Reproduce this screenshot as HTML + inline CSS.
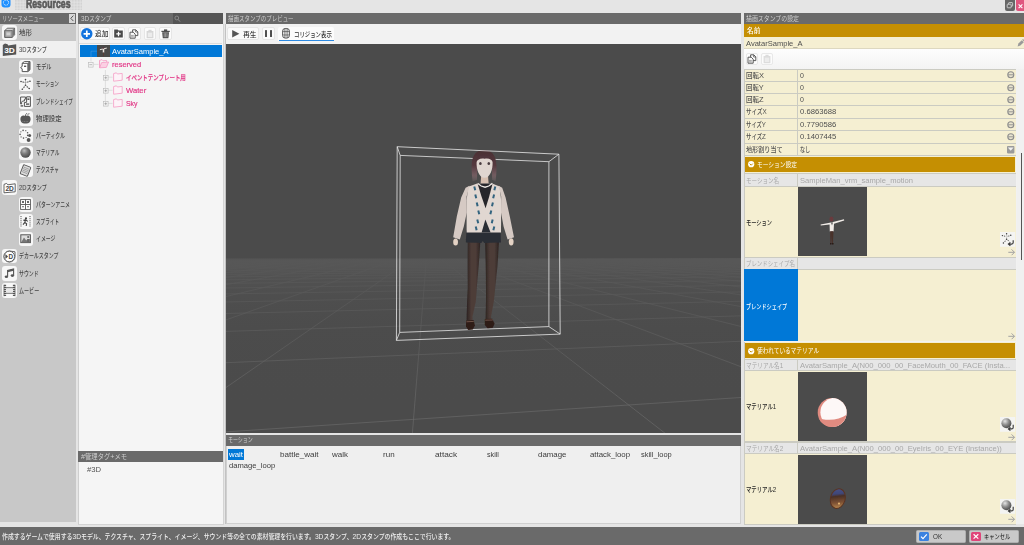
<!DOCTYPE html>
<html lang="ja">
<head>
<meta charset="utf-8">
<title>Resources</title>
<style>
*{box-sizing:border-box;margin:0;padding:0}
html,body{width:1024px;height:545px;overflow:hidden;background:#e5e5e5}
body{position:relative;font-family:"Liberation Sans","Noto Sans CJK JP",sans-serif;font-size:7.5px;color:#444;line-height:1}
.a{position:absolute}
.t{position:absolute;white-space:nowrap;line-height:10px;height:10px;transform-origin:0 50%}
svg{position:absolute;overflow:visible}
.t b{font-weight:400;font-size:7.9px}
</style>
</head>
<body>
<div class="a" style="left:0px;top:0px;width:1024px;height:13px;background:#e5e5e5;"></div>
<svg style="left:15px;top:0" width="67" height="10" viewBox="0 0 67 10"><defs><pattern id="dt" width="1.5" height="1.5" patternUnits="userSpaceOnUse"><rect x="0.2" y="0.2" width="0.75" height="0.75" fill="#bcbcbc"/></pattern></defs><rect width="67" height="10" fill="url(#dt)"/></svg>
<div class="a" style="left:1005px;top:0px;width:10px;height:10.5px;background:#666;border-radius:0 0 2px 2px"></div>
<svg style="left:1005px;top:0" width="10" height="10.5" viewBox="0 0 10 10.5"><rect x="3.6" y="2.6" width="4" height="3.6" fill="none" stroke="#ddd" stroke-width="0.8" rx="0.6"/><rect x="2.2" y="4.2" width="4" height="3.6" fill="#666" stroke="#ddd" stroke-width="0.8" rx="0.6"/></svg>
<div class="a" style="left:1016px;top:0px;width:8px;height:10.5px;background:#e0567f;border-radius:0 0 0 2px"></div>
<svg style="left:1016px;top:0" width="8" height="10.5" viewBox="0 0 8 10.5"><path d="M2.6 4.4L6.4 8.2M6.4 4.4L2.6 8.2" stroke="#fff" stroke-width="1.1"/></svg>
<svg style="left:1px;top:-2px" width="10" height="10" viewBox="0 0 10 10"><rect x="0.5" y="0" width="9" height="9.5" rx="3" fill="#1e90ff"/><circle cx="5" cy="4.6" r="2.6" fill="none" stroke="#fff" stroke-width="1" stroke-dasharray="1 0.8"/></svg>
<div class="a" style="left:0px;top:13.2px;width:76px;height:10.8px;background:#6a6a6a;"></div>
<div class="a" style="left:69px;top:14.3px;width:6.2px;height:8.7px;background:#d8d8d8;"></div>
<svg style="left:69px;top:14.3px" width="6.2" height="8.7" viewBox="0 0 6.2 8.7"><path d="M4.4 1.6L1.8 4.35L4.4 7.1" fill="none" stroke="#555" stroke-width="1"/></svg>
<div class="a" style="left:78.2px;top:13.2px;width:144.8px;height:10.8px;background:#6a6a6a;"></div>
<div class="a" style="left:173px;top:13.2px;width:50px;height:10.8px;background:#555;"></div>
<svg style="left:174px;top:14.5px" width="7" height="8" viewBox="0 0 7 8"><circle cx="2.8" cy="3" r="1.9" fill="none" stroke="#939393" stroke-width="0.8"/><path d="M4.2 4.5L6 6.6" stroke="#939393" stroke-width="1"/></svg>
<div class="a" style="left:225.8px;top:13.2px;width:515.7px;height:10.8px;background:#6a6a6a;"></div>
<div class="a" style="left:744px;top:13.2px;width:280px;height:11.3px;background:#6a6a6a;"></div>
<div class="a" style="left:0px;top:526.6px;width:1024px;height:18.4px;background:#6a6a6a;"></div>
<div class="a" style="left:916.4px;top:530px;width:49.6px;height:13.2px;background:#c9c9c9;border-radius:1.5px;border:0.5px solid #b0b0b0"></div>
<div class="a" style="left:919.2px;top:532.2px;width:9.6px;height:8.8px;background:#3b82e0;border-radius:1.5px"></div>
<svg style="left:919.2px;top:532.2px" width="9.6" height="8.8" viewBox="0 0 9.6 8.8"><path d="M2 4.6L4 6.6L7.8 2.4" fill="none" stroke="#fff" stroke-width="1.2"/></svg>
<div class="a" style="left:968.7px;top:530px;width:50.5px;height:13.2px;background:#c9c9c9;border-radius:1.5px;border:0.5px solid #b0b0b0"></div>
<div class="a" style="left:970.7px;top:532.2px;width:9.9px;height:8.8px;background:#e0457a;border-radius:1.5px"></div>
<svg style="left:970.7px;top:532.2px" width="9.9" height="8.8" viewBox="0 0 9.9 8.8"><path d="M2.6 2.2L7.3 6.6M7.3 2.2L2.6 6.6" fill="none" stroke="#fff" stroke-width="1.2"/></svg>
<div class="a" style="left:0px;top:24px;width:76px;height:498.2px;background:#c8c8c8;"></div>
<div class="a" style="left:2px;top:25.1px;width:14.6px;height:14.8px;background:#f7f7f7;border-radius:3px"></div>
<svg style="left:1.8px;top:25px" width="15" height="15" viewBox="0 0 15 15"><path d="M2.8 5.6L5.2 3.2H12.6V9.8L10.2 12.4H2.8Z" fill="#d4d4d4" stroke="#5c5c5c" stroke-width="0.9" stroke-linejoin="round"/><path d="M2.8 5.6H10.2V12.4H2.8Z" fill="#a8a8a8" stroke="#5c5c5c" stroke-width="0.8"/><path d="M10.2 5.6L12.6 3.2" stroke="#5c5c5c" stroke-width="0.8"/><path d="M10.6 5.8L12.2 4.2V9.6L10.6 11.4Z" fill="#727272"/><rect x="4.4" y="7.4" width="4" height="3" fill="#d0d0d0"/></svg>
<div class="a" style="left:0px;top:41.1px;width:76px;height:17.2px;background:#f0f0f0;"></div>
<svg style="left:1.8px;top:42.2px" width="15" height="15" viewBox="0 0 15 15"><path d="M0.8 3L3 1.6L5.6 2.2L6.2 3.4L14.2 2.2V12.4L0.8 14Z" fill="#565656"/><text x="7.5" y="11" font-size="7.6" font-weight="700" fill="#fff" text-anchor="middle" font-family="Liberation Sans,sans-serif" textLength="10.6" lengthAdjust="spacingAndGlyphs">3D</text></svg>
<div class="a" style="left:18.6px;top:59.5px;width:14.6px;height:14.8px;background:#f7f7f7;border-radius:3px"></div>
<svg style="left:18.4px;top:59.4px" width="15" height="15" viewBox="0 0 15 15"><path d="M4.2 4.2L6.4 2.6H12V10.8L9.8 12.6H4.2V9.8L2.6 8.6L4.2 7.4Z" fill="#fff" stroke="#555" stroke-width="1"/><path d="M9.8 4.4V12.6M9.8 4.4L12 2.6M4.2 4.4H9.8" fill="none" stroke="#555" stroke-width="0.9"/><path d="M10 4.2L12 2.8V10.8L10 12.4Z" fill="#666"/><rect x="6" y="6.6" width="2.2" height="1.4" fill="#555"/></svg>
<div class="a" style="left:18.6px;top:76.7px;width:14.6px;height:14.8px;background:#f7f7f7;border-radius:3px"></div>
<svg style="left:18.4px;top:76.6px" width="15" height="15" viewBox="0 0 15 15"><path d="M7.5 2.5V8.2M3.2 4.6L7.5 5.6L11.8 4.2M7.5 8.2L4.4 12.2M7.5 8.2L11 11.4" fill="none" stroke="#777" stroke-width="0.45"/><g fill="#444"><circle cx="7.5" cy="2.6" r="0.8"/><circle cx="3" cy="4.5" r="0.8"/><circle cx="12" cy="4.2" r="0.8"/><circle cx="7.5" cy="8.2" r="0.8"/><circle cx="4.3" cy="12.3" r="0.8"/><circle cx="11.2" cy="11.5" r="0.8"/><circle cx="5.2" cy="5.1" r="0.6"/><circle cx="9.8" cy="5" r="0.6"/><circle cx="6" cy="10.2" r="0.6"/><circle cx="9.3" cy="9.9" r="0.6"/></g></svg>
<div class="a" style="left:18.6px;top:93.9px;width:14.6px;height:14.8px;background:#f7f7f7;border-radius:3px"></div>
<svg style="left:18.4px;top:93.8px" width="15" height="15" viewBox="0 0 15 15"><path d="M2.6 3H7.6V5.2H6.4V7H4.6L3.6 8.2V10H2.6Z" fill="none" stroke="#555" stroke-width="1"/><path d="M8.6 2.8H12.4V12.4H6.4V8.4H8.6Z" fill="none" stroke="#555" stroke-width="1"/><rect x="9.4" y="4.4" width="2" height="1.6" fill="#555"/><rect x="8" y="9.4" width="3.2" height="1.4" fill="#555"/><path d="M2.6 11.2H5.2V12.6H2.6Z" fill="#555"/></svg>
<div class="a" style="left:18.6px;top:111.1px;width:14.6px;height:14.8px;background:#f7f7f7;border-radius:3px"></div>
<svg style="left:18.4px;top:111px" width="15" height="15" viewBox="0 0 15 15"><path d="M7.5 5C9.5 3.6 13 4.6 12.6 8.4C12.3 11.4 10.2 13 7.5 12.4C4.8 13 2.7 11.4 2.4 8.4C2 4.6 5.5 3.6 7.5 5Z" fill="#555"/><path d="M7.4 5.2C7.4 3.8 8 2.8 8.8 2.2" fill="none" stroke="#555" stroke-width="0.9"/><path d="M9 3.2C10 2.2 11.4 2.4 11.8 2.8C11 3.8 9.8 3.8 9 3.2Z" fill="#555"/><path d="M4.5 10.6H10.5" stroke="#999" stroke-width="0.7" stroke-dasharray="0.8 0.8"/></svg>
<div class="a" style="left:18.6px;top:128.3px;width:14.6px;height:14.8px;background:#f7f7f7;border-radius:3px"></div>
<svg style="left:18.4px;top:128.2px" width="15" height="15" viewBox="0 0 15 15"><g fill="#555"><circle cx="9.7" cy="7.4" r="0.8"/><circle cx="8.1" cy="9.5" r="0.6"/><circle cx="5.5" cy="10.1" r="0.8"/><circle cx="3.1" cy="8.9" r="0.6"/><circle cx="2.1" cy="6.4" r="0.8"/><circle cx="2.9" cy="3.8" r="0.6"/><circle cx="5.1" cy="2.4" r="0.8"/><circle cx="7.8" cy="2.7" r="0.6"/><circle cx="9.6" cy="4.7" r="0.8"/><circle cx="11.6" cy="7.6" r="1.5"/><circle cx="10.6" cy="12" r="1.9"/></g></svg>
<div class="a" style="left:18.6px;top:145.5px;width:14.6px;height:14.8px;background:#f7f7f7;border-radius:3px"></div>
<svg style="left:18.4px;top:145.4px" width="15" height="15" viewBox="0 0 15 15"><defs><radialGradient id="sg" cx="0.38" cy="0.32" r="0.7"><stop offset="0" stop-color="#bdbdbd"/><stop offset="0.45" stop-color="#7c7c7c"/><stop offset="1" stop-color="#4a4a4a"/></radialGradient></defs><circle cx="7.5" cy="7.5" r="5.2" fill="url(#sg)"/></svg>
<div class="a" style="left:18.6px;top:162.7px;width:14.6px;height:14.8px;background:#f7f7f7;border-radius:3px"></div>
<svg style="left:18.4px;top:162.6px" width="15" height="15" viewBox="0 0 15 15"><g transform="rotate(22 7.5 7.5)"><rect x="3.6" y="2.6" width="7.8" height="9.8" rx="0.8" fill="#dcdcdc" stroke="#555" stroke-width="0.9"/><path d="M4.6 5H10.4M4.6 6.6H10.4M4.6 8.2H10.4M4.6 9.8H10.4" stroke="#888" stroke-width="0.6"/></g></svg>
<div class="a" style="left:2px;top:179.9px;width:14.6px;height:14.8px;background:#f7f7f7;border-radius:3px"></div>
<svg style="left:1.8px;top:179.8px" width="15" height="15" viewBox="0 0 15 15"><path d="M2 4.4L4.6 3.4L5.8 4.8L13.2 3.8V11.8L2 12.8Z" fill="#fff" stroke="#555" stroke-width="0.9"/><text x="7.6" y="10.8" font-size="6.6" font-weight="700" fill="#444" text-anchor="middle" font-family="Liberation Sans,sans-serif">2D</text></svg>
<div class="a" style="left:18.6px;top:197.1px;width:14.6px;height:14.8px;background:#f7f7f7;border-radius:3px"></div>
<svg style="left:18.4px;top:197px" width="15" height="15" viewBox="0 0 15 15"><rect x="2.6" y="2.6" width="9.8" height="9.8" fill="#fff" stroke="#555" stroke-width="0.9"/><path d="M7.5 2.6V12.4M2.6 7.5H12.4" stroke="#555" stroke-width="0.9"/><g fill="#666"><rect x="4" y="4" width="2" height="2"/><rect x="9" y="4" width="2" height="2"/><path d="M4 9H6L5 11Z"/><path d="M9 9H11L10 11Z"/></g></svg>
<div class="a" style="left:18.6px;top:214.3px;width:14.6px;height:14.8px;background:#f7f7f7;border-radius:3px"></div>
<svg style="left:18.4px;top:214.2px" width="15" height="15" viewBox="0 0 15 15"><path d="M3 2V13M12 2V13" stroke="#555" stroke-width="1" stroke-dasharray="1.1 1"/><circle cx="8" cy="4.4" r="1.1" fill="#444"/><path d="M7.8 5.4L6.8 8.4L8.6 9.8L8.2 12M6.8 8.4L5 10.6M5.4 6.4L7.6 5.8L9.8 7.4" fill="none" stroke="#444" stroke-width="1.1"/></svg>
<div class="a" style="left:18.6px;top:231.5px;width:14.6px;height:14.8px;background:#f7f7f7;border-radius:3px"></div>
<svg style="left:18.4px;top:231.4px" width="15" height="15" viewBox="0 0 15 15"><rect x="2.8" y="3.8" width="9.6" height="7.8" fill="#ddd" stroke="#555" stroke-width="1"/><path d="M3.2 11.2L6 6.4L8.2 9.4L9.4 8L11.8 11.2Z" fill="#777"/><circle cx="10.2" cy="6" r="1.1" fill="#666"/><path d="M9.2 8H11.8V11H9.2Z" fill="#666"/></svg>
<div class="a" style="left:2px;top:248.7px;width:14.6px;height:14.8px;background:#f7f7f7;border-radius:3px"></div>
<svg style="left:1.8px;top:248.6px" width="15" height="15" viewBox="0 0 15 15"><path d="M7.5 2A5.5 5.5 0 1 0 13 7.5L13 2.8Z" fill="#fff" stroke="#555" stroke-width="0.9"/><circle cx="7.3" cy="7.5" r="5.3" fill="#fff" stroke="#555" stroke-width="0.9"/><path d="M3.4 5L6 7.5L3.4 10Z" fill="#4a4a4a"/><text x="8.9" y="10.1" font-size="7.4" font-weight="700" fill="#444" text-anchor="middle" font-family="Liberation Sans,sans-serif" textLength="4.6" lengthAdjust="spacingAndGlyphs">D</text></svg>
<div class="a" style="left:2px;top:265.9px;width:14.6px;height:14.8px;background:#f7f7f7;border-radius:3px"></div>
<svg style="left:1.8px;top:265.8px" width="15" height="15" viewBox="0 0 15 15"><path d="M5.6 10.6V4.4L11.6 3V9.4" fill="none" stroke="#555" stroke-width="1.1"/><path d="M5.6 4.4L11.6 3V4.8L5.6 6.2Z" fill="#555"/><ellipse cx="4.4" cy="10.8" rx="1.7" ry="1.3" fill="#555"/><ellipse cx="10.4" cy="9.6" rx="1.7" ry="1.3" fill="#555"/></svg>
<div class="a" style="left:2px;top:283.1px;width:14.6px;height:14.8px;background:#f7f7f7;border-radius:3px"></div>
<svg style="left:1.8px;top:283px" width="15" height="15" viewBox="0 0 15 15"><path d="M3 1.8V13.2M12 1.8V13.2" stroke="#555" stroke-width="2.2" stroke-dasharray="1.2 0.8"/><path d="M2 1.8V13.2M13 1.8V13.2" stroke="#555" stroke-width="0.7"/><path d="M4 4.8H11M4 10.2H11" stroke="#555" stroke-width="1"/><rect x="4.4" y="5.4" width="6.2" height="4.2" fill="#e8e8e8"/></svg>
<div class="a" style="left:78.2px;top:24px;width:145.4px;height:500.8px;background:#f5f5f5;border-left:1px solid #cfcfcf;border-right:1px solid #d4d4d4;border-bottom:1px solid #d4d4d4"></div>
<div class="a" style="left:79.2px;top:24px;width:143px;height:19.6px;background:#f3f3f3;border-bottom:0.8px solid #dcdcdc"></div>
<div class="a" style="left:79.6px;top:27.4px;width:30px;height:12.8px;background:#fbfbfb;border:0.6px solid #e6e6e6;border-radius:2px"></div>
<svg style="left:81.2px;top:28px" width="11.6" height="11.6" viewBox="0 0 11.6 11.6"><circle cx="5.8" cy="5.8" r="5.7" fill="#1273de"/><path d="M5.8 2.6V9M2.6 5.8H9" stroke="#fff" stroke-width="1.7"/></svg>
<div class="a" style="left:112.2px;top:27.4px;width:13.2px;height:12.8px;background:#fbfbfb;border:0.6px solid #e6e6e6;border-radius:2px"></div>
<svg style="left:114.3px;top:29.4px" width="9" height="8.6" viewBox="0 0 9 8.6"><path d="M0.2 0.4H3.6L4.6 1.5H8.8V8.4H0.2Z" fill="#4a4a4a"/><path d="M4.5 2.8V7.2M2.3 5H6.7" stroke="#fff" stroke-width="1.25"/></svg>
<div class="a" style="left:127.9px;top:27.4px;width:12.9px;height:12.8px;background:#fbfbfb;border:0.6px solid #e6e6e6;border-radius:2px"></div>
<svg style="left:129.4px;top:28.9px" width="10" height="10" viewBox="0 0 10 10"><path d="M3.6 0.8H6.8L8.8 2.8V6.6H3.6Z" fill="#fbfbfb" stroke="#4a4a4a" stroke-width="0.9"/><path d="M6.6 0.8V3H8.8" fill="none" stroke="#4a4a4a" stroke-width="0.7"/><path d="M1 3.2H4.2L6.2 5.2V9.2H1Z" fill="#fbfbfb" stroke="#4a4a4a" stroke-width="0.9"/><path d="M2 6.4H4.8M2 7.8H4.8" stroke="#4a4a4a" stroke-width="0.5"/></svg>
<div class="a" style="left:143.5px;top:27.4px;width:12.8px;height:12.8px;background:#fbfbfb;border:0.6px solid #e6e6e6;border-radius:2px"></div>
<svg style="left:144.9px;top:28.9px" width="10" height="10" viewBox="0 0 10 10"><path d="M1.6 2H8.4V9.2H1.6Z" fill="#d6d6d6"/><rect x="3.4" y="0.8" width="3.2" height="2" fill="#d6d6d6"/><rect x="2.8" y="3.6" width="4.4" height="4.4" fill="#ececec"/></svg>
<div class="a" style="left:159px;top:27.4px;width:12.6px;height:12.8px;background:#fbfbfb;border:0.6px solid #e6e6e6;border-radius:2px"></div>
<svg style="left:160.9px;top:29px" width="9.2" height="9.4" viewBox="0 0 9.2 9.4"><path d="M0.4 1.8H8.8V3H0.4Z" fill="#4f4f4f"/><rect x="3" y="0.4" width="3.2" height="1.6" fill="#4f4f4f"/><path d="M1.2 3.2H8L7.4 9.2H1.8Z" fill="#4f4f4f"/><path d="M3.2 4.2V8.2M4.6 4.2V8.2M6 4.2V8.2" stroke="#cfcfcf" stroke-width="0.6"/></svg>
<div class="a" style="left:79.8px;top:44.8px;width:142.5px;height:12.5px;background:#0078d7;"></div>
<div class="a" style="left:97.3px;top:44.8px;width:12.7px;height:12.5px;background:#4a4a4a;"></div>
<svg width="0" height="0" style="left:0;top:0"><defs><filter id="bl0"><feGaussianBlur stdDeviation="0.3"/></filter></defs></svg>
<svg style="left:97.3px;top:45px" width="12.7" height="12.3" viewBox="0 0 12.7 12.3"><g filter="url(#bl0)"><path d="M2.9 4.7L9.8 3.1" stroke="#ece6e2" stroke-width="1"/><path d="M6.5 4V7.6" stroke="#ece6e2" stroke-width="1.5"/><path d="M6.5 7.6V11.3" stroke="#5a3c36" stroke-width="0.9"/><circle cx="6.3" cy="2.8" r="0.85" fill="#5a3840"/></g></svg>
<svg style="left:0;top:0" width="230" height="120" viewBox="0 0 230 120"><path d="M91 51.2H97M91 51.2V57.3" fill="none" stroke="#fff" stroke-opacity="0.22" stroke-width="0.7"/><path d="M91 57.3V61.6M93.8 64.4H98.6M105.4 70V103.4M108 77.2H112.6M108 90.3H112.6M108 103.4H112.6" fill="none" stroke="#d6d6d6" stroke-width="0.7"/></svg>
<svg style="left:88.3px;top:61.7px" width="5.4" height="5.4" viewBox="0 0 5.4 5.4"><rect x="0.3" y="0.3" width="4.8" height="4.8" fill="#f5f5f5" stroke="#b8b8b8" stroke-width="0.6"/><path d="M1.3 2.7H4.1" stroke="#909090" stroke-width="0.6"/></svg>
<svg style="left:98.8px;top:59.2px" width="10" height="10" viewBox="0 0 10 10"><path d="M0.6 1.4L3 0.6L4 1.8L7.6 1.4V3.2" fill="none" stroke="#f59cc4" stroke-width="0.8"/><path d="M0.6 1.4V8.8L2.6 3.6L9.6 3L7.4 8.4L0.6 8.8Z" fill="#fbd0e3" stroke="#f59cc4" stroke-width="0.8"/></svg>
<svg style="left:102.8px;top:74.6px" width="5.4" height="5.4" viewBox="0 0 5.4 5.4"><rect x="0.3" y="0.3" width="4.8" height="4.8" fill="#f5f5f5" stroke="#b8b8b8" stroke-width="0.6"/><path d="M1.3 2.7H4.1" stroke="#909090" stroke-width="0.6"/><path d="M2.7 1.3V4.1" stroke="#909090" stroke-width="0.6"/></svg>
<svg style="left:113.2px;top:72.2px" width="10" height="10" viewBox="0 0 10 10"><path d="M0.6 1.6L3.4 0.8L4.4 2L9.2 1.4V8.2L0.6 9.2Z" fill="#fdf3f8" stroke="#f59cc4" stroke-width="0.8"/></svg>
<svg style="left:102.8px;top:87.65px" width="5.4" height="5.4" viewBox="0 0 5.4 5.4"><rect x="0.3" y="0.3" width="4.8" height="4.8" fill="#f5f5f5" stroke="#b8b8b8" stroke-width="0.6"/><path d="M1.3 2.7H4.1" stroke="#909090" stroke-width="0.6"/><path d="M2.7 1.3V4.1" stroke="#909090" stroke-width="0.6"/></svg>
<svg style="left:113.2px;top:85.25px" width="10" height="10" viewBox="0 0 10 10"><path d="M0.6 1.6L3.4 0.8L4.4 2L9.2 1.4V8.2L0.6 9.2Z" fill="#fdf3f8" stroke="#f59cc4" stroke-width="0.8"/></svg>
<svg style="left:102.8px;top:100.7px" width="5.4" height="5.4" viewBox="0 0 5.4 5.4"><rect x="0.3" y="0.3" width="4.8" height="4.8" fill="#f5f5f5" stroke="#b8b8b8" stroke-width="0.6"/><path d="M1.3 2.7H4.1" stroke="#909090" stroke-width="0.6"/><path d="M2.7 1.3V4.1" stroke="#909090" stroke-width="0.6"/></svg>
<svg style="left:113.2px;top:98.3px" width="10" height="10" viewBox="0 0 10 10"><path d="M0.6 1.6L3.4 0.8L4.4 2L9.2 1.4V8.2L0.6 9.2Z" fill="#fdf3f8" stroke="#f59cc4" stroke-width="0.8"/></svg>
<div class="a" style="left:78.2px;top:451.2px;width:144.8px;height:11.3px;background:#6a6a6a;"></div>
<div class="a" style="left:225.2px;top:24px;width:0.8px;height:500.3px;background:#c2c2c2;"></div>
<div class="a" style="left:225.8px;top:24px;width:515.7px;height:19.6px;background:#f2f2f2;"></div>
<div class="a" style="left:227.3px;top:27px;width:31.7px;height:13.2px;background:#fafafa;border:0.6px solid #e6e6e6;border-radius:2px"></div>
<svg style="left:231.6px;top:30px" width="7.6" height="7.6" viewBox="0 0 7.6 7.6"><path d="M0.2 0.1L7.4 3.8L0.2 7.5Z" fill="#555"/></svg>
<div class="a" style="left:261.9px;top:27px;width:12.9px;height:13.2px;background:#fafafa;border:0.6px solid #e6e6e6;border-radius:2px"></div>
<div class="a" style="left:265.1px;top:30.2px;width:2.1px;height:7.1px;background:#4f4f4f;border-radius:0.5px"></div>
<div class="a" style="left:270px;top:30.2px;width:2.2px;height:7.1px;background:#4f4f4f;border-radius:0.5px"></div>
<div class="a" style="left:278.3px;top:27px;width:55.7px;height:14.2px;background:#fcfcfc;border-radius:2px 2px 0 0"></div>
<div class="a" style="left:278.8px;top:40.2px;width:54.8px;height:1.1px;background:#2d8ae2;"></div>
<svg style="left:282px;top:28.2px" width="8" height="10.6" viewBox="0 0 8 10.6"><rect x="0.6" y="0.5" width="6.8" height="9.6" rx="2.6" fill="#f2f2f2" stroke="#4a4a4a" stroke-width="0.9"/><path d="M2.9 0.6V10M5.1 0.6V10M0.6 3.6H7.4M0.6 7H7.4" stroke="#4a4a4a" stroke-width="0.7"/></svg>
<div class="a" style="left:225.8px;top:435px;width:515.7px;height:10.8px;background:#6a6a6a;"></div>
<div class="a" style="left:225.8px;top:445.8px;width:515.7px;height:78.5px;background:#efefef;border:1px solid #d0d0d0;border-top:0"></div>
<div class="a" style="left:228.3px;top:448.8px;width:15.8px;height:10.9px;background:#0078d7;"></div>
<div class="a" style="left:225.8px;top:43.6px;width:515.7px;height:389.1px;background:#4b4b4b;overflow:hidden">
<svg style="left:0;top:0" width="515.7" height="389.1" viewBox="0 0 515.7 389.1">
<defs><filter id="bl2" x="-10%" y="-10%" width="120%" height="120%"><feGaussianBlur stdDeviation="0.5"/></filter><linearGradient id="hair" x1="0" y1="0" x2="0" y2="1"><stop offset="0" stop-color="#4a2f33"/><stop offset="0.5" stop-color="#553a3f"/><stop offset="0.8" stop-color="#7a5f64" stop-opacity="0.85"/><stop offset="1" stop-color="#8d7478" stop-opacity="0.15"/></linearGradient><linearGradient id="leg" x1="0" y1="0" x2="1" y2="0"><stop offset="0" stop-color="#2c2321"/><stop offset="0.35" stop-color="#4e3e39"/><stop offset="0.65" stop-color="#4e3e39"/><stop offset="1" stop-color="#2c2321"/></linearGradient><linearGradient id="fog" x1="0" y1="0" x2="0" y2="1"><stop offset="0" stop-color="#565656" stop-opacity="0.94"/><stop offset="0.1" stop-color="#545454" stop-opacity="0.8"/><stop offset="0.25" stop-color="#505050" stop-opacity="0.62"/><stop offset="0.5" stop-color="#4d4d4d" stop-opacity="0.4"/><stop offset="0.75" stop-color="#4c4c4c" stop-opacity="0.2"/><stop offset="1" stop-color="#4b4b4b" stop-opacity="0"/></linearGradient></defs>
<path d="M-32368.1 997.3L-371.8 218.3M-31284.6 997.3L-348.6 218.2M-30201.1 997.3L-325.8 218.1M-29117.5 997.3L-303.2 218.0M-28034.0 997.3L-281.1 217.9M-26950.5 997.3L-259.2 217.8M-25866.9 997.3L-237.7 217.7M-24783.4 997.3L-216.4 217.7M-23699.9 997.3L-195.5 217.6M-22616.4 997.3L-174.9 217.5M-21532.8 997.3L-154.5 217.4M-20449.3 997.3L-134.4 217.3M-19365.8 997.3L-114.6 217.2M-18282.3 997.3L-95.1 217.1M-17198.7 997.3L-75.9 217.0M-16115.2 997.3L-56.9 216.9M-15031.7 997.3L-38.1 216.9M-13948.2 997.3L-19.6 216.8M-12864.6 997.3L-1.4 216.7M-11781.1 997.3L16.7 216.6M-10697.6 997.3L34.4 216.5M-9614.0 997.3L52.0 216.5M-8530.5 997.3L69.3 216.4M-7447.0 997.3L86.4 216.3M-6363.5 997.3L103.3 216.2M-5279.9 997.3L120.0 216.1M-4196.4 997.3L136.4 216.1M-3112.9 997.3L152.7 216.0M-2029.4 997.3L168.8 215.9M-945.8 997.3L184.6 215.9M137.7 997.3L200.3 215.8M1221.2 997.3L215.8 215.7M2304.7 997.3L231.0 215.7M3388.3 997.3L246.1 215.6M4471.8 997.3L261.1 215.5M5555.3 997.3L275.8 215.5M6638.9 997.3L290.4 215.4M7722.4 997.3L304.8 215.3M8805.9 997.3L319.0 215.3M9889.4 997.3L333.1 215.2M10973.0 997.3L347.0 215.1M12056.5 997.3L360.7 215.1M13140.0 997.3L374.3 215.0M14223.5 997.3L387.8 215.0M15307.1 997.3L401.1 214.9M16390.6 997.3L414.2 214.8M17474.1 997.3L427.2 214.8M18557.6 997.3L440.0 214.7M19641.2 997.3L452.7 214.7M20724.7 997.3L465.3 214.6M21808.2 997.3L477.7 214.5M22891.8 997.3L490.0 214.5M23975.3 997.3L502.2 214.4M25058.8 997.3L514.2 214.4M26142.3 997.3L526.1 214.3M27225.9 997.3L537.9 214.3M28309.4 997.3L549.5 214.2M29392.9 997.3L561.1 214.2M30476.4 997.3L572.5 214.1M31560.0 997.3L583.8 214.1M32643.5 997.3L595.0 214.0M26832.4 997.3L10081.8 445.9M19642.5 997.3L5512.0 334.2M12452.5 997.3L3832.6 293.1M5262.6 997.3L2960.1 271.8M-1927.4 997.3L2425.6 258.8M-9117.3 997.3L2064.7 249.9M-16307.3 997.3L1804.5 243.6M-23497.2 997.3L1608.0 238.8M-30687.2 997.3L1454.5 235.0M-10090.2 454.9L1331.2 232.0M-5236.1 336.8L1229.9 229.5M-3493.5 294.3L1145.3 227.5M-2596.8 272.5L1073.6 225.7M-2050.3 259.2L1012.0 224.2M-1682.4 250.3L958.5 222.9M-1417.9 243.8L911.7 221.8M-1218.5 239.0L870.3 220.8M-1062.8 235.2L833.4 219.9M-937.9 232.1L800.4 219.0M-835.5 229.6L770.7 218.3M-750.0 227.6L743.8 217.7M-677.5 225.8L719.3 217.1M-615.2 224.3L697.0 216.5M-561.2 223.0L676.4 216.0M-513.9 221.8L657.5 215.6M-472.2 220.8L640.1 215.1M-435.0 219.9L623.9 214.7M-401.7 219.1L608.9 214.4M-371.8 218.3L595.0 214.0" fill="none" stroke="#686868" stroke-width="0.7"/>
<rect x="0" y="214.2" width="515.7" height="150" fill="url(#fog)"/>
<rect x="0" y="0" width="515.7" height="214.2" fill="#4b4b4b"/>
<polygon points="174.2,111.4 322.9,117.7 322.9,282.6 173.7,288.4" fill="none" stroke="#e6e6e6" stroke-width="0.8"/>
<polyline points="174.2,111.4 171.2,102.7" fill="none" stroke="#e6e6e6" stroke-width="0.8"/>
<polyline points="322.9,117.7 332.9,110.2" fill="none" stroke="#e6e6e6" stroke-width="0.8"/>
<polyline points="322.9,282.6 334.2,290.1" fill="none" stroke="#e6e6e6" stroke-width="0.8"/>
<polyline points="173.7,288.4 170.4,296.4" fill="none" stroke="#e6e6e6" stroke-width="0.8"/>
<g filter="url(#bl2)">
<polygon points="241.7,197.4 254.4,197.4 252.7,222.0 250.8,244.1 249.9,257.3 246.5,272.7 246.6,276.4 240.6,276.4 240.6,272.7 241.1,257.3 241.7,244.1 241.6,221.4" fill="url(#leg)"/>
<polygon points="259.1,197.4 273.0,197.4 271.5,222.0 269.2,244.1 267.9,257.3 265.0,272.7 265.2,275.4 259.6,275.4 259.6,272.7 260.0,257.3 260.0,244.1 259.7,221.4" fill="url(#leg)"/>
<polygon points="240.1,276.4 247.6,276.0 248.9,281.4 246.8,285.6 242.2,286.0 240.0,282.4" fill="#2f1b18"/>
<polygon points="258.8,275.0 266.2,274.8 268.6,279.8 266.8,283.8 261.6,284.2 258.8,281.0" fill="#2f1b18"/>
<polyline points="240.4,277.8 247.8,277.4" fill="none" stroke="#8a6c5c" stroke-width="0.7"/>
<polyline points="259.2,276.2 266.8,276.0" fill="none" stroke="#8a6c5c" stroke-width="0.7"/>
<polygon points="240.4,186.4 274.6,186.4 275.0,198.6 258.2,199.0 256.8,197.0 255.4,199.0 239.8,198.6" fill="#2c2e35"/>
<ellipse cx="229.6" cy="198.0" rx="2.4" ry="3.6" fill="#e4d2c4"/>
<ellipse cx="285.2" cy="197.8" rx="2.4" ry="3.6" fill="#e4d2c4"/>
<polygon points="255.2,131.4 262.0,131.4 262.8,141.8 254.4,141.8" fill="#d6bfb0"/>
<polygon points="251.2,139.4 266.2,139.4 273.6,142.4 275.2,156.4 275.0,188.4 240.6,188.4 240.6,156.4 242.2,142.8" fill="#e1d7d1"/>
<polygon points="243.6,141.8 240.6,152.4 240.8,168.4 237.8,182.4 233.8,195.4 227.2,193.2 230.8,172.4 235.2,153.4 239.6,143.8" fill="#d6cac4"/>
<polygon points="272.6,141.8 275.2,152.4 275.0,168.4 277.6,182.4 281.6,195.4 288.0,193.2 283.8,172.4 279.6,153.4 276.2,143.8" fill="#d6cac4"/>
<polygon points="251.6,139.6 266.6,139.6 263.2,152.4 259.6,164.2 255.2,151.4" fill="#26262b"/>
<polyline points="251.8,139.4 255.2,142.0 259.1,143.2 262.8,142.0 266.4,139.4" fill="none" stroke="#efeae6" stroke-width="1.3"/>
<polygon points="259.4,175.4 264.6,188.4 255.6,188.4" fill="#2c2e35"/>
<rect x="247.8" y="142.4" width="2" height="3.8" fill="#33647f" transform="rotate(-14 248.8 144.4)"/>
<rect x="248.8" y="150.4" width="2" height="3.8" fill="#33647f" transform="rotate(-14 249.8 152.4)"/>
<rect x="250.2" y="158.4" width="2" height="3.8" fill="#33647f" transform="rotate(-14 251.2 160.4)"/>
<rect x="251.8" y="166.4" width="2" height="3.8" fill="#33647f" transform="rotate(-14 252.8 168.4)"/>
<rect x="250.8" y="175.4" width="2" height="3.8" fill="#33647f" transform="rotate(-14 251.8 177.4)"/>
<rect x="249.2" y="182.4" width="2" height="3.8" fill="#33647f" transform="rotate(-14 250.2 184.4)"/>
<rect x="267.8" y="142.4" width="2" height="3.8" fill="#33647f" transform="rotate(14 268.8 144.4)"/>
<rect x="266.6" y="150.4" width="2" height="3.8" fill="#33647f" transform="rotate(14 267.6 152.4)"/>
<rect x="265.4" y="158.4" width="2" height="3.8" fill="#33647f" transform="rotate(14 266.4 160.4)"/>
<rect x="263.8" y="166.4" width="2" height="3.8" fill="#33647f" transform="rotate(14 264.8 168.4)"/>
<rect x="265.2" y="175.4" width="2" height="3.8" fill="#33647f" transform="rotate(14 266.2 177.4)"/>
<rect x="266.8" y="182.4" width="2" height="3.8" fill="#33647f" transform="rotate(14 267.8 184.4)"/>
<path d="M246.6 137.4 C245.6 127.4 245.0 119.4 246.8 114.0 C248.8 108.4 252.6 106.0 258.0 106.0 C263.4 106.0 267.2 108.4 269.2 114.0 C271.0 119.4 270.8 127.4 269.6 137.4 L266.2 135.8 L266.0 124.4 L251.2 124.4 L251.0 135.8 Z" fill="url(#hair)"/>
<path d="M250.6 117.9 C250.6 112.0 266.6 112.0 266.6 117.9 C267.0 125.4 264.0 133.8 258.6 133.8 C253.2 133.8 250.2 125.4 250.6 117.9 Z" fill="#e0d6d0"/>
<path d="M249.6 119.0 C248.4 108.8 268.6 108.8 267.6 119.0 C266.2 115.6 262.8 113.8 258.6 114.8 C254.6 113.8 251.2 115.6 249.6 119.0 Z" fill="#50343a"/>
<ellipse cx="254.4" cy="119.6" rx="1.3" ry="1.5" fill="#4a3c40"/><ellipse cx="262.8" cy="119.6" rx="1.3" ry="1.5" fill="#4a3c40"/>
</g>
<polygon points="171.2,102.7 332.9,110.2 334.2,290.1 170.4,296.4" fill="none" stroke="#eaeaea" stroke-width="0.8"/>
</svg>
</div>
<div class="a" style="left:744px;top:24px;width:280px;height:500.4px;background:#f1f1f1;"></div>
<div class="a" style="left:744px;top:24.4px;width:280px;height:12.2px;background:#c58f02;"></div>
<div class="a" style="left:744px;top:36.6px;width:280px;height:12.3px;background:#f5efd2;border-bottom:0.7px solid #ddd8c0"></div>
<svg style="left:1016.6px;top:38.6px" width="8" height="8" viewBox="0 0 8 8"><path d="M0.6 7.4L1.4 4.6L4.8 1.2L6.8 3.2L3.4 6.6Z" fill="#9a9a9a"/><path d="M5.2 0.8L6 0L8 2L7.2 2.8Z" fill="#9a9a9a"/></svg>
<div class="a" style="left:744px;top:49.2px;width:280px;height:19.4px;background:linear-gradient(#fdfdfd,#f3f3f3);"></div>
<div class="a" style="left:745.6px;top:53px;width:12.2px;height:12.2px;background:#fcfcfc;border:0.6px solid #e8e8e8;border-radius:2px"></div>
<svg style="left:746.8px;top:54.2px" width="10" height="10" viewBox="0 0 10 10"><path d="M3.6 0.8H6.8L8.8 2.8V6.6H3.6Z" fill="#fbfbfb" stroke="#4a4a4a" stroke-width="0.9"/><path d="M6.6 0.8V3H8.8" fill="none" stroke="#4a4a4a" stroke-width="0.7"/><path d="M1 3.2H4.2L6.2 5.2V9.2H1Z" fill="#fbfbfb" stroke="#4a4a4a" stroke-width="0.9"/><path d="M2 6.4H4.8M2 7.8H4.8" stroke="#4a4a4a" stroke-width="0.5"/></svg>
<div class="a" style="left:760.6px;top:53px;width:12.9px;height:12.2px;background:#fcfcfc;border:0.6px solid #e8e8e8;border-radius:2px"></div>
<svg style="left:762px;top:54.2px" width="10" height="10" viewBox="0 0 10 10"><path d="M1.6 2H8.4V9.2H1.6Z" fill="#dcdcdc"/><rect x="3.4" y="0.8" width="3.2" height="2" fill="#dcdcdc"/><rect x="2.8" y="3.6" width="4.4" height="4.4" fill="#ececec"/></svg>
<div class="a" style="left:744px;top:68.6px;width:272.4px;height:87.3px;background:#cbcbc2;"></div>
<div class="a" style="left:744.6px;top:69.6px;width:52.45px;height:11.2px;background:#f5efd2;"></div>
<div class="a" style="left:797.75px;top:69.6px;width:218.05px;height:11.2px;background:#f5efd2;"></div>
<svg style="left:1007.2px;top:71.4px" width="7.6" height="7.6" viewBox="0 0 7.6 7.6"><circle cx="3.8" cy="3.8" r="3" fill="#e9e4cf" stroke="#8c8c8c" stroke-width="1.1"/><path d="M1.2 3.8H6.4" stroke="#8c8c8c" stroke-width="0.9"/></svg>
<div class="a" style="left:744.6px;top:81.8px;width:52.45px;height:11.2px;background:#f5efd2;"></div>
<div class="a" style="left:797.75px;top:81.8px;width:218.05px;height:11.2px;background:#f5efd2;"></div>
<svg style="left:1007.2px;top:83.6px" width="7.6" height="7.6" viewBox="0 0 7.6 7.6"><circle cx="3.8" cy="3.8" r="3" fill="#e9e4cf" stroke="#8c8c8c" stroke-width="1.1"/><path d="M1.2 3.8H6.4" stroke="#8c8c8c" stroke-width="0.9"/></svg>
<div class="a" style="left:744.6px;top:94px;width:52.45px;height:11.2px;background:#f5efd2;"></div>
<div class="a" style="left:797.75px;top:94px;width:218.05px;height:11.2px;background:#f5efd2;"></div>
<svg style="left:1007.2px;top:95.8px" width="7.6" height="7.6" viewBox="0 0 7.6 7.6"><circle cx="3.8" cy="3.8" r="3" fill="#e9e4cf" stroke="#8c8c8c" stroke-width="1.1"/><path d="M1.2 3.8H6.4" stroke="#8c8c8c" stroke-width="0.9"/></svg>
<div class="a" style="left:744.6px;top:106.2px;width:52.45px;height:11.4px;background:#f5efd2;"></div>
<div class="a" style="left:797.75px;top:106.2px;width:218.05px;height:11.4px;background:#f5efd2;"></div>
<svg style="left:1007.2px;top:108.1px" width="7.6" height="7.6" viewBox="0 0 7.6 7.6"><circle cx="3.8" cy="3.8" r="3" fill="#e9e4cf" stroke="#8c8c8c" stroke-width="1.1"/><path d="M1.2 3.8H6.4" stroke="#8c8c8c" stroke-width="0.9"/></svg>
<div class="a" style="left:744.6px;top:118.6px;width:52.45px;height:11.4px;background:#f5efd2;"></div>
<div class="a" style="left:797.75px;top:118.6px;width:218.05px;height:11.4px;background:#f5efd2;"></div>
<svg style="left:1007.2px;top:120.5px" width="7.6" height="7.6" viewBox="0 0 7.6 7.6"><circle cx="3.8" cy="3.8" r="3" fill="#e9e4cf" stroke="#8c8c8c" stroke-width="1.1"/><path d="M1.2 3.8H6.4" stroke="#8c8c8c" stroke-width="0.9"/></svg>
<div class="a" style="left:744.6px;top:131px;width:52.45px;height:11.6px;background:#f5efd2;"></div>
<div class="a" style="left:797.75px;top:131px;width:218.05px;height:11.6px;background:#f5efd2;"></div>
<svg style="left:1007.2px;top:133px" width="7.6" height="7.6" viewBox="0 0 7.6 7.6"><circle cx="3.8" cy="3.8" r="3" fill="#e9e4cf" stroke="#8c8c8c" stroke-width="1.1"/><path d="M1.2 3.8H6.4" stroke="#8c8c8c" stroke-width="0.9"/></svg>
<div class="a" style="left:744.6px;top:143.6px;width:52.45px;height:11.3px;background:#f5efd2;"></div>
<div class="a" style="left:797.75px;top:143.6px;width:218.05px;height:11.3px;background:#f5efd2;"></div>
<svg style="left:1007.4px;top:145.65px" width="7.4" height="7.4" viewBox="0 0 7.4 7.4"><rect width="7.4" height="7.4" rx="0.8" fill="#9a9a9a"/><path d="M0.8 1.6H6.6L3.7 4.8Z" fill="#f0f0f0"/></svg>
<svg width="0" height="0" style="left:0;top:0"><defs><filter id="bl1" x="-10%" y="-10%" width="120%" height="120%"><feGaussianBlur stdDeviation="0.45"/></filter></defs></svg>
<div class="a" style="left:744px;top:155.4px;width:272.4px;height:17.9px;background:#cbcbc2;"></div>
<div class="a" style="left:744.6px;top:155.8px;width:271.2px;height:17.1px;background:#f5efd2;"></div>
<div class="a" style="left:745.1px;top:157px;width:270.1px;height:14.9px;background:#c58f02;"></div>
<svg style="left:747.5px;top:161.45px" width="6.4" height="6.4" viewBox="0 0 6.4 6.4"><circle cx="3.2" cy="3.2" r="3.1" fill="#fff"/><path d="M1.6 2.6L3.2 4.2L4.8 2.6" fill="none" stroke="#c58f02" stroke-width="1"/></svg>
<div class="a" style="left:744px;top:173.3px;width:272.4px;height:13.1px;background:#cbcbc2;"></div>
<div class="a" style="left:744.6px;top:174px;width:52.45px;height:11.7px;background:#e6e6e6;"></div>
<div class="a" style="left:797.75px;top:174px;width:218.05px;height:11.7px;background:#e6e6e6;"></div>
<div class="a" style="left:744px;top:186px;width:272.4px;height:71.5px;background:#cbcbc2;"></div>
<div class="a" style="left:744.6px;top:186.7px;width:52.45px;height:70.1px;background:#f5efd2;"></div>
<div class="a" style="left:797.05px;top:186.7px;width:218.75px;height:70.1px;background:#f5efd2;"></div>
<div class="a" style="left:798px;top:187.3px;width:68.7px;height:69.2px;background:#4b4b4b;"></div>
<svg style="left:798px;top:187.3px" width="68.7" height="69" viewBox="0 0 68.7 69"><g filter="url(#bl1)"><path d="M22.6 37.4L33 35.6L46 32.2L46.2 33.4L36 36.8L35.6 44.4L31.8 44.4L31.6 37.6L22.8 38.6Z" fill="#f1ece8"/><path d="M32.2 44.2H35.4L35 56L34 56.4L33.8 47L33.4 56.4L32.4 56Z" fill="#4a302a"/><ellipse cx="33.4" cy="32" rx="2" ry="2.6" fill="#6b3a3e"/><path d="M33.2 35.6L34 38.4L34.8 35.6Z" fill="#333"/><path d="M32 56H33.6V57.4H32ZM34 56H35.6V57.4H34Z" fill="#2a1a18"/></g></svg>
<svg style="left:1000.2px;top:232.1px" width="15.2" height="14.8" viewBox="0 0 15.2 14.8"><rect width="15.2" height="14.8" fill="#f4f4f2"/><path d="M6.6 1.6V7.2M2.4 3.6L6.6 4.6L10.8 3.2M6.6 7.2L3.4 11M6.6 7.2L9.4 9.6" fill="none" stroke="#888" stroke-width="0.5" stroke-dasharray="0.9 0.7"/><g fill="#3c3c3c"><circle cx="6.6" cy="1.8" r="0.7"/><circle cx="2.4" cy="3.6" r="0.7"/><circle cx="10.8" cy="3.2" r="0.7"/><circle cx="6.6" cy="7.2" r="0.7"/><circle cx="3.4" cy="11" r="0.7"/><circle cx="4.6" cy="4.1" r="0.5"/><circle cx="8.8" cy="3.9" r="0.5"/><circle cx="5" cy="9.2" r="0.5"/><circle cx="8.2" cy="8.6" r="0.5"/></g><path d="M13.2 8.2V10.6Q13.2 12.1 11.6 12.1H8.6M10.4 10.4L8.4 12.1L10.4 13.8" fill="none" stroke="#3a3a3a" stroke-width="1.15"/></svg>
<svg style="left:1007.6px;top:249px" width="7" height="6.6" viewBox="0 0 7 6.6"><path d="M0.3 3.3H6.4M3.6 0.4L6.5 3.3L3.6 6.2" fill="none" stroke="#a2a2a2" stroke-width="1"/></svg>
<div class="a" style="left:744px;top:257.3px;width:272.4px;height:12.5px;background:#cbcbc2;"></div>
<div class="a" style="left:744.6px;top:258px;width:52.45px;height:11.1px;background:#e6e6e6;"></div>
<div class="a" style="left:797.75px;top:258px;width:218.05px;height:11.1px;background:#e6e6e6;"></div>
<div class="a" style="left:744px;top:269.4px;width:272.4px;height:72px;background:#cbcbc2;"></div>
<div class="a" style="left:744.6px;top:270.1px;width:52.45px;height:70.6px;background:#0078d7;"></div>
<div class="a" style="left:797.75px;top:270.1px;width:218.05px;height:70.6px;background:#f5efd2;"></div>
<div class="a" style="left:744px;top:269.4px;width:53.6px;height:72px;background:#0078d7;"></div>
<svg style="left:1007.6px;top:332.9px" width="7" height="6.6" viewBox="0 0 7 6.6"><path d="M0.3 3.3H6.4M3.6 0.4L6.5 3.3L3.6 6.2" fill="none" stroke="#a2a2a2" stroke-width="1"/></svg>
<div class="a" style="left:744px;top:341.6px;width:272.4px;height:17.7px;background:#cbcbc2;"></div>
<div class="a" style="left:744.6px;top:342px;width:271.2px;height:16.9px;background:#f5efd2;"></div>
<div class="a" style="left:745.1px;top:343.2px;width:270.1px;height:14.7px;background:#c58f02;"></div>
<svg style="left:747.5px;top:347.55px" width="6.4" height="6.4" viewBox="0 0 6.4 6.4"><circle cx="3.2" cy="3.2" r="3.1" fill="#fff"/><path d="M1.6 2.6L3.2 4.2L4.8 2.6" fill="none" stroke="#c58f02" stroke-width="1"/></svg>
<div class="a" style="left:744px;top:359px;width:272.4px;height:12px;background:#cbcbc2;"></div>
<div class="a" style="left:744.6px;top:359.7px;width:52.45px;height:10.6px;background:#e6e6e6;"></div>
<div class="a" style="left:797.75px;top:359.7px;width:218.05px;height:10.6px;background:#e6e6e6;"></div>
<div class="a" style="left:744px;top:370.6px;width:272.4px;height:71.4px;background:#cbcbc2;"></div>
<div class="a" style="left:744.6px;top:371.3px;width:52.45px;height:70px;background:#f5efd2;"></div>
<div class="a" style="left:797.05px;top:371.3px;width:218.75px;height:70px;background:#f5efd2;"></div>
<div class="a" style="left:798px;top:371.9px;width:68.7px;height:69.1px;background:#4b4b4b;"></div>
<svg style="left:798px;top:371.9px" width="68.7" height="69" viewBox="0 0 68.7 69"><defs><clipPath id="sc"><circle cx="34.2" cy="40.6" r="14.5"/></clipPath></defs><g filter="url(#bl1)"><circle cx="34.2" cy="40.6" r="14.5" fill="#e08b80"/><g clip-path="url(#sc)"><circle cx="36.8" cy="40.2" r="14.4" fill="#fdf8f7"/><path d="M18 44.6C26 49.6 42 49 50.4 41.4V58H18Z" fill="#e08b80"/></g></g></svg>
<svg style="left:1000.2px;top:416.6px" width="15.2" height="14.8" viewBox="0 0 15.2 14.8"><rect width="15.2" height="14.8" fill="#f4f4f2"/><defs><radialGradient id="sg2" cx="0.36" cy="0.3" r="0.75"><stop offset="0" stop-color="#e4e4e4"/><stop offset="0.5" stop-color="#8c8c8c"/><stop offset="1" stop-color="#464646"/></radialGradient></defs><circle cx="6.4" cy="6.2" r="5" fill="url(#sg2)"/><path d="M13.2 7.8V10.4Q13.2 11.9 11.6 11.9H8.6M10.4 10.2L8.4 11.9L10.4 13.6" fill="none" stroke="#3a3a3a" stroke-width="1.15"/></svg>
<svg style="left:1007.6px;top:433.5px" width="7" height="6.6" viewBox="0 0 7 6.6"><path d="M0.3 3.3H6.4M3.6 0.4L6.5 3.3L3.6 6.2" fill="none" stroke="#a2a2a2" stroke-width="1"/></svg>
<div class="a" style="left:744px;top:441.8px;width:272.4px;height:12.2px;background:#cbcbc2;"></div>
<div class="a" style="left:744.6px;top:442.5px;width:52.45px;height:10.8px;background:#e6e6e6;"></div>
<div class="a" style="left:797.75px;top:442.5px;width:218.05px;height:10.8px;background:#e6e6e6;"></div>
<div class="a" style="left:744px;top:453.6px;width:272.4px;height:71px;background:#cbcbc2;"></div>
<div class="a" style="left:744.6px;top:454.3px;width:52.45px;height:69.6px;background:#f5efd2;"></div>
<div class="a" style="left:797.05px;top:454.3px;width:218.75px;height:69.6px;background:#f5efd2;"></div>
<div class="a" style="left:798px;top:454.9px;width:68.7px;height:68.7px;background:#4b4b4b;"></div>
<svg style="left:798px;top:454.9px" width="68.7" height="69" viewBox="0 0 68.7 69"><defs><linearGradient id="eg" x1="0" y1="0" x2="0.3" y2="1"><stop offset="0" stop-color="#4a5590"/><stop offset="0.36" stop-color="#3f4678"/><stop offset="0.48" stop-color="#4a3026"/><stop offset="0.8" stop-color="#7e5234"/><stop offset="1" stop-color="#a87848"/></linearGradient></defs><g filter="url(#bl1)"><ellipse cx="39.8" cy="43.6" rx="7.4" ry="10" transform="rotate(16 39.8 43.6)" fill="url(#eg)" stroke="#5a3422" stroke-width="1"/><circle cx="41" cy="48.6" r="1.1" fill="#e0b070"/></g></svg>
<svg style="left:1000.2px;top:499.2px" width="15.2" height="14.8" viewBox="0 0 15.2 14.8"><rect width="15.2" height="14.8" fill="#f4f4f2"/><defs><radialGradient id="sg2" cx="0.36" cy="0.3" r="0.75"><stop offset="0" stop-color="#e4e4e4"/><stop offset="0.5" stop-color="#8c8c8c"/><stop offset="1" stop-color="#464646"/></radialGradient></defs><circle cx="6.4" cy="6.2" r="5" fill="url(#sg2)"/><path d="M13.2 7.8V10.4Q13.2 11.9 11.6 11.9H8.6M10.4 10.2L8.4 11.9L10.4 13.6" fill="none" stroke="#3a3a3a" stroke-width="1.15"/></svg>
<svg style="left:1007.6px;top:516.1px" width="7" height="6.6" viewBox="0 0 7 6.6"><path d="M0.3 3.3H6.4M3.6 0.4L6.5 3.3L3.6 6.2" fill="none" stroke="#a2a2a2" stroke-width="1"/></svg>
<div class="a" style="left:1016.9px;top:152px;width:7.1px;height:372.4px;background:#f0f0f0;"></div>
<div class="a" style="left:1021px;top:152.6px;width:1.2px;height:107px;background:#555;"></div>
<span class="t" style="left:26px;top:-1.1px;font-size:12.5px;color:#5a5a5a;font-weight:700;transform:scaleX(0.6960);-webkit-text-stroke:0.7px #5a5a5a;">Resources</span>
<span class="t" style="left:1.5px;top:13.8px;font-size:6.9px;color:#cdcdcd;transform:scaleX(0.7667);">リソースメニュー</span>
<span class="t" style="left:80.7px;top:13.8px;font-size:6.9px;color:#cdcdcd;transform:scaleX(0.8090);"><b>3D</b>スタンプ</span>
<span class="t" style="left:227.9px;top:13.8px;font-size:6.9px;color:#cdcdcd;transform:scaleX(0.7953);">描画スタンプのプレビュー</span>
<span class="t" style="left:746.3px;top:13.8px;font-size:6.9px;color:#cdcdcd;transform:scaleX(0.8574);">描画スタンプの設定</span>
<span class="t" style="left:2px;top:531.6px;font-size:6.9px;color:#f0f0f0;font-weight:500;transform:scaleX(0.8534);">作成するゲームで使用する<b>3D</b>モデル、テクスチャ、スプライト、イメージ、サウンド等の全ての素材管理を行います。<b>3D</b>スタンプ、<b>2D</b>スタンプの作成もここで行います。</span>
<span class="t" style="left:932.9px;top:531.9px;font-size:7.8px;color:#333;transform:scaleX(0.8078);">OK</span>
<span class="t" style="left:983.9px;top:531.9px;font-size:6.9px;color:#333;font-weight:500;transform:scaleX(0.7576);">キャンセル</span>
<span class="t" style="left:19.3px;top:27.7px;font-size:6.9px;color:#454545;font-weight:500;transform:scaleX(0.9361);">地形</span>
<span class="t" style="left:19.3px;top:44.9px;font-size:6.9px;color:#454545;font-weight:500;transform:scaleX(0.7449);"><b>3D</b>スタンプ</span>
<span class="t" style="left:36px;top:62.1px;font-size:6.9px;color:#454545;font-weight:500;transform:scaleX(0.7498);">モデル</span>
<span class="t" style="left:36px;top:79.3px;font-size:6.9px;color:#454545;font-weight:500;transform:scaleX(0.6700);">モーション</span>
<span class="t" style="left:36px;top:96.5px;font-size:6.9px;color:#454545;font-weight:500;transform:scaleX(0.6712);">ブレンドシェイプ</span>
<span class="t" style="left:36px;top:113.7px;font-size:6.9px;color:#454545;font-weight:500;transform:scaleX(0.9252);">物理設定</span>
<span class="t" style="left:36px;top:130.9px;font-size:6.9px;color:#454545;font-weight:500;transform:scaleX(0.7119);">パーティクル</span>
<span class="t" style="left:36px;top:148.1px;font-size:6.9px;color:#454545;font-weight:500;transform:scaleX(0.6833);">マテリアル</span>
<span class="t" style="left:36px;top:165.3px;font-size:6.9px;color:#454545;font-weight:500;transform:scaleX(0.6728);">テクスチャ</span>
<span class="t" style="left:19.3px;top:182.5px;font-size:6.9px;color:#454545;font-weight:500;transform:scaleX(0.7449);"><b>2D</b>スタンプ</span>
<span class="t" style="left:36px;top:199.7px;font-size:6.9px;color:#454545;font-weight:500;transform:scaleX(0.7118);">パターンアニメ</span>
<span class="t" style="left:36px;top:216.9px;font-size:6.9px;color:#454545;font-weight:500;transform:scaleX(0.6676);">スプライト</span>
<span class="t" style="left:36px;top:234.1px;font-size:6.9px;color:#454545;font-weight:500;transform:scaleX(0.7107);">イメージ</span>
<span class="t" style="left:19.3px;top:251.3px;font-size:6.9px;color:#454545;font-weight:500;transform:scaleX(0.7192);">デカールスタンプ</span>
<span class="t" style="left:19.3px;top:268.5px;font-size:6.9px;color:#454545;font-weight:500;transform:scaleX(0.7147);">サウンド</span>
<span class="t" style="left:19.3px;top:285.7px;font-size:6.9px;color:#454545;font-weight:500;transform:scaleX(0.7329);">ムービー</span>
<span class="t" style="left:94.8px;top:29.2px;font-size:6.9px;color:#333;font-weight:500;transform:scaleX(0.9723);">追加</span>
<span class="t" style="left:112.3px;top:47.3px;font-size:7.8px;color:#fff;transform:scaleX(0.9679);">AvatarSample_A</span>
<span class="t" style="left:111.8px;top:59.6px;font-size:7.8px;color:#e23a88;transform:scaleX(0.9623);-webkit-text-stroke:0.2px #e23a88;">reserved</span>
<span class="t" style="left:126.4px;top:72.6px;font-size:6.9px;color:#e23a88;font-weight:500;transform:scaleX(0.7911);-webkit-text-stroke:0.2px #e23a88;">イベントテンプレート用</span>
<span class="t" style="left:126.4px;top:85.65px;font-size:7.8px;color:#e23a88;transform:scaleX(0.9846);-webkit-text-stroke:0.2px #e23a88;">Water</span>
<span class="t" style="left:126.4px;top:98.7px;font-size:7.8px;color:#e23a88;transform:scaleX(0.8846);-webkit-text-stroke:0.2px #e23a88;">Sky</span>
<span class="t" style="left:80.9px;top:452.2px;font-size:6.9px;color:#cdcdcd;transform:scaleX(0.9157);"><b>#</b>管理タグ<b>+</b>メモ</span>
<span class="t" style="left:87.1px;top:464.9px;font-size:7.8px;color:#555;transform:scaleX(0.9852);">#3D</span>
<span class="t" style="left:243.1px;top:29.6px;font-size:6.9px;color:#333;font-weight:500;transform:scaleX(0.9796);">再生</span>
<span class="t" style="left:293.8px;top:29.6px;font-size:6.9px;color:#333;font-weight:500;transform:scaleX(0.7837);">コリジョン表示</span>
<span class="t" style="left:228.3px;top:435.3px;font-size:6.9px;color:#cdcdcd;transform:scaleX(0.7195);">モーション</span>
<span class="t" style="left:229.2px;top:449.9px;font-size:7.8px;color:#fff;transform:scaleX(1.0090);">wait</span>
<span class="t" style="left:280.4px;top:449.9px;font-size:7.8px;color:#3c3c3c;transform:scaleX(1.0354);">battle_wait</span>
<span class="t" style="left:331.6px;top:449.9px;font-size:7.8px;color:#3c3c3c;transform:scaleX(1.0250);">walk</span>
<span class="t" style="left:383.4px;top:449.9px;font-size:7.8px;color:#3c3c3c;transform:scaleX(1.0283);">run</span>
<span class="t" style="left:434.7px;top:449.9px;font-size:7.8px;color:#3c3c3c;transform:scaleX(1.0619);">attack</span>
<span class="t" style="left:486.6px;top:449.9px;font-size:7.8px;color:#3c3c3c;transform:scaleX(0.9154);">skill</span>
<span class="t" style="left:537.8px;top:449.9px;font-size:7.8px;color:#3c3c3c;transform:scaleX(1.0111);">damage</span>
<span class="t" style="left:589.9px;top:449.9px;font-size:7.8px;color:#3c3c3c;transform:scaleX(1.0052);">attack_loop</span>
<span class="t" style="left:641.1px;top:449.9px;font-size:7.8px;color:#3c3c3c;transform:scaleX(0.9570);">skill_loop</span>
<span class="t" style="left:229.1px;top:461.4px;font-size:7.8px;color:#3c3c3c;transform:scaleX(0.9775);">damage_loop</span>
<span class="t" style="left:747.1px;top:25.7px;font-size:6.9px;color:#fff;font-weight:500;transform:scaleX(0.9651);">名前</span>
<span class="t" style="left:746.3px;top:39.3px;font-size:7.8px;color:#4f4f4f;transform:scaleX(0.9679);">AvatarSample_A</span>
<span class="t" style="left:746.3px;top:70.5px;font-size:6.9px;color:#4f4f4f;font-weight:500;transform:scaleX(0.9503);">回転<b>X</b></span>
<span class="t" style="left:799.9px;top:70.5px;font-size:7.8px;color:#4f4f4f;transform:scaleX(0.8978);">0</span>
<span class="t" style="left:746.3px;top:82.7px;font-size:6.9px;color:#4f4f4f;font-weight:500;transform:scaleX(0.9293);">回転<b>Y</b></span>
<span class="t" style="left:799.9px;top:82.7px;font-size:7.8px;color:#4f4f4f;transform:scaleX(0.8978);">0</span>
<span class="t" style="left:746.3px;top:94.9px;font-size:6.9px;color:#4f4f4f;font-weight:500;transform:scaleX(0.9511);">回転<b>Z</b></span>
<span class="t" style="left:799.9px;top:94.9px;font-size:7.8px;color:#4f4f4f;transform:scaleX(0.8978);">0</span>
<span class="t" style="left:746.3px;top:107.2px;font-size:6.9px;color:#4f4f4f;font-weight:500;transform:scaleX(0.8044);">サイズ<b>X</b></span>
<span class="t" style="left:799.9px;top:107.2px;font-size:7.8px;color:#4f4f4f;transform:scaleX(0.9848);">0.6863688</span>
<span class="t" style="left:746.3px;top:119.6px;font-size:6.9px;color:#4f4f4f;font-weight:500;transform:scaleX(0.7733);">サイズ<b>Y</b></span>
<span class="t" style="left:799.9px;top:119.6px;font-size:7.8px;color:#4f4f4f;transform:scaleX(0.9848);">0.7790586</span>
<span class="t" style="left:746.3px;top:132.1px;font-size:6.9px;color:#4f4f4f;font-weight:500;transform:scaleX(0.7867);">サイズ<b>Z</b></span>
<span class="t" style="left:799.9px;top:132.1px;font-size:7.8px;color:#4f4f4f;transform:scaleX(0.9848);">0.1407445</span>
<span class="t" style="left:746.3px;top:144.55px;font-size:6.9px;color:#4f4f4f;font-weight:500;transform:scaleX(0.8853);">地形割り当て</span>
<span class="t" style="left:799.9px;top:144.55px;font-size:6.9px;color:#4f4f4f;font-weight:500;transform:scaleX(0.7401);">なし</span>
<span class="t" style="left:756.5px;top:159.75px;font-size:6.9px;color:#fff;transform:scaleX(0.8294);">モーション設定</span>
<span class="t" style="left:745.5px;top:175.65px;font-size:6.9px;color:#a8a8a8;transform:scaleX(0.8030);">モーション名</span>
<span class="t" style="left:799.9px;top:175.65px;font-size:7.8px;color:#a8a8a8;transform:scaleX(0.9721);">SampleMan_vrm_sample_motion</span>
<span class="t" style="left:745.8px;top:217.85px;font-size:6.9px;color:#262626;font-weight:500;transform:scaleX(0.7574);">モーション</span>
<span class="t" style="left:745.5px;top:259.35px;font-size:6.9px;color:#a8a8a8;transform:scaleX(0.7869);">ブレンドシェイプ名</span>
<span class="t" style="left:745.8px;top:301.5px;font-size:6.9px;color:#fff;font-weight:500;transform:scaleX(0.7474);">ブレンドシェイプ</span>
<span class="t" style="left:756.5px;top:345.85px;font-size:6.9px;color:#fff;transform:scaleX(0.8290);">使われているマテリアル</span>
<span class="t" style="left:745.5px;top:360.8px;font-size:6.9px;color:#a8a8a8;transform:scaleX(0.8167);">マテリアル名<b>1</b></span>
<span class="t" style="left:799.9px;top:360.8px;font-size:7.8px;color:#a8a8a8;transform:scaleX(0.9779);">AvatarSample_A(N00_000_00_FaceMouth_00_FACE (Insta...</span>
<span class="t" style="left:745.8px;top:402.4px;font-size:6.9px;color:#262626;font-weight:500;transform:scaleX(0.7787);">マテリアル<b>1</b></span>
<span class="t" style="left:745.5px;top:443.7px;font-size:6.9px;color:#a8a8a8;transform:scaleX(0.8167);">マテリアル名<b>2</b></span>
<span class="t" style="left:799.9px;top:443.7px;font-size:7.8px;color:#a8a8a8;transform:scaleX(0.9793);">AvatarSample_A(N00_000_00_EyeIris_00_EYE (Instance))</span>
<span class="t" style="left:745.8px;top:485.2px;font-size:6.9px;color:#262626;font-weight:500;transform:scaleX(0.7787);">マテリアル<b>2</b></span>
</body>
</html>
